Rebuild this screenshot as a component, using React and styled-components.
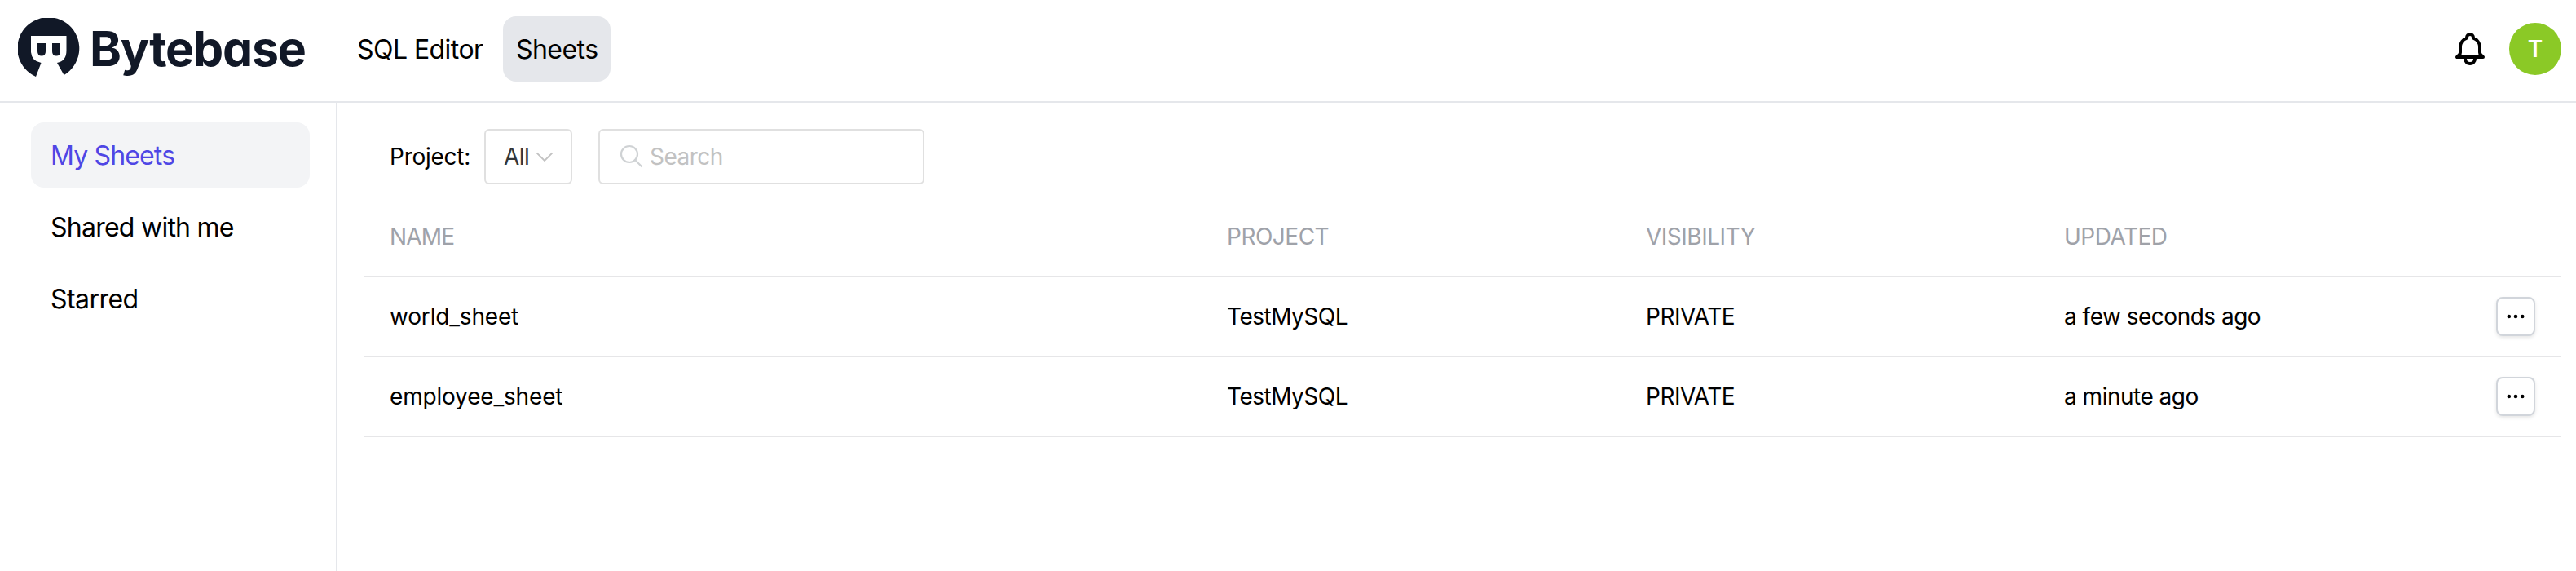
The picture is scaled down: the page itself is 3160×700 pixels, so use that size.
import React from "react";
import styled, { createGlobalStyle } from "styled-components";

const Global = createGlobalStyle`
  *, *::before, *::after { box-sizing: border-box; }
  body { margin: 0; background: #fff; color: #000; font-family: Inter, "Liberation Sans", sans-serif; }
`;

const Page = styled.div`
  display: flex;
  flex-direction: column;
  height: 700px;
  overflow: hidden;
`;

const Header = styled.header`
  display: flex;
  align-items: center;
  height: 126px;
  padding: 0 18px 4px 22px;
  border-bottom: 2px solid #e5e7eb;
`;

const Brand = styled.div`
  display: flex;
  align-items: center;
  width: 400px;
`;

const BrandMark = styled.svg`
  display: block;
  width: 76px;
  height: 73px;
  margin: 0 12px 4px 0;
`;

const Wordmark = styled.span`
  font-weight: 700;
  font-size: 59px;
  line-height: 76px;
  color: #111827;
  white-space: nowrap;
  letter-spacing: -1.2px;
  font-feature-settings: "cv11" 1;
`;

const Nav = styled.nav`
  display: flex;
  gap: 8px;
  flex: 1;
`;

const NavItem = styled.a`
  height: 80px;
  padding: 0 16px;
  border-radius: 16px;
  font-size: 32px;
  line-height: 81px;
  white-space: nowrap;
  letter-spacing: -0.55px;
  width: ${(p) => p.$width};
  background: ${(p) => (p.$active ? "#e5e7eb" : "transparent")};
`;

const Bell = styled.svg`
  width: 48px;
  height: 48px;
  margin-right: 24px;
`;

const Avatar = styled.div`
  display: flex;
  align-items: center;
  justify-content: center;
  width: 64px;
  height: 64px;
  border-radius: 50%;
  background: #8bc926;
  color: #fff;
  font-size: 28px;
  font-weight: 600;
`;

const Body = styled.div`
  display: flex;
  flex: 1;
`;

const Sidebar = styled.aside`
  display: flex;
  flex-direction: column;
  gap: 8px;
  width: 414px;
  padding: 24px 32px 0 38px;
  border-right: 2px solid #e5e7eb;
`;

const SideItem = styled.a`
  height: 80px;
  padding: 0 24px;
  border-radius: 16px;
  font-size: 32px;
  line-height: 81px;
  letter-spacing: ${(p) => p.$spacing || "-0.75px"};
  white-space: nowrap;
  color: ${(p) => (p.$active ? "#4f46e5" : "#000")};
  background: ${(p) => (p.$active ? "#f3f4f6" : "transparent")};
`;

const Main = styled.main`
  flex: 1;
  padding: 32px 18px 0 32px;
`;

const Filters = styled.div`
  display: flex;
  align-items: center;
  height: 68px;
  padding-left: 32px;
`;

const Label = styled.span`
  width: 116px;
  font-size: 28px;
  letter-spacing: -0.25px;
  white-space: nowrap;
`;

const Field = styled.div`
  display: flex;
  align-items: center;
  width: ${(p) => p.$width};
  height: 68px;
  margin-right: 32px;
  padding: 0 22px;
  border: 2px solid #e0e0e0;
  border-radius: 6px;
  font-size: 28px;
  letter-spacing: -0.5px;
  color: ${(p) => (p.$muted ? "#c2c2c2" : "#333639")};
`;

const FieldIcon = styled.svg`
  flex: none;
  width: ${(p) => p.$size};
  height: ${(p) => p.$size};
  margin: ${(p) => p.$margin};
`;

const Table = styled.div`
  padding-top: 16px;
`;

const Row = styled.div`
  display: grid;
  grid-template-columns: 1027px 514px 513px 1fr auto;
  align-items: center;
  height: 98px;
  padding: 0 32px;
  border-bottom: 2px solid #e6e6e8;
  font-size: 28px;
  color: ${(p) => (p.$head ? "#9fa2a9" : "#000")};
`;

const Cell = styled.span`
  white-space: nowrap;
  letter-spacing: ${(p) => p.$spacing || "-0.5px"};
`;

const MoreButton = styled.button`
  display: flex;
  align-items: center;
  justify-content: center;
  width: 48px;
  height: 48px;
  padding: 0;
  border: 2px solid #d1d5db;
  border-radius: 8px;
  background: #fff;
  box-shadow: 0 2px 4px rgba(0, 0, 0, 0.1);
`;

const rows = [
  { name: "world_sheet", project: "TestMySQL", visibility: "PRIVATE", updated: "a few seconds ago" },
  { name: "employee_sheet", project: "TestMySQL", visibility: "PRIVATE", updated: "a minute ago" },
];

export default function App() {
  return (
    <Page>
      <Global />
      <Header>
        <Brand>
          <BrandMark viewBox="0 0 76 73">
            <path fill="#111827" d="M22 72A38 38 0 1 1 56.5 70L48 55Q59.5 53 59.5 40V22H16V42Q17 53 28.5 55Z" />
            <path fill="#111827" d="M24 31H34V41Q34 46.5 29 46.5T24 41ZM42 31H52V41Q52 46.5 47 46.5T42 41Z" />
          </BrandMark>
          <Wordmark>Bytebase</Wordmark>
        </Brand>
        <Nav>
          <NavItem $width="187px">SQL Editor</NavItem>
          <NavItem $active $width="132px">Sheets</NavItem>
        </Nav>
        <Bell viewBox="0 0 24 24" fill="none" stroke="#000" strokeWidth="2" strokeLinecap="round" strokeLinejoin="round">
          <path d="M15 17h5l-1.405-1.405A2.032 2.032 0 0118 14.158V11a6.002 6.002 0 00-4-5.659V5a2 2 0 10-4 0v.341C7.67 6.165 6 8.388 6 11v3.159c0 .538-.214 1.055-.595 1.436L4 17h5m6 0v1a3 3 0 11-6 0v-1m6 0H9" />
        </Bell>
        <Avatar>T</Avatar>
      </Header>
      <Body>
        <Sidebar>
          <SideItem $active $spacing="-0.85px">My Sheets</SideItem>
          <SideItem>Shared with me</SideItem>
          <SideItem $spacing="-0.55px">Starred</SideItem>
        </Sidebar>
        <Main>
          <Filters>
            <Label>Project:</Label>
            <Field $width="108px">
              All
              <FieldIcon $size="20px" $margin="0 0 0 9px" viewBox="0 0 20 20" fill="none" stroke="#c2c2c2" strokeWidth="1.8">
                <path d="M0.5 5.5L10 15L19.5 5.5" />
              </FieldIcon>
            </Field>
            <Field $width="400px" $muted>
              <FieldIcon $size="30px" $margin="0 8px 0 1px" viewBox="0 0 30 30" fill="none" stroke="#cfd2d4" strokeWidth="2.2" strokeLinecap="round">
                <circle cx="13" cy="12" r="10" />
                <path d="M20 19L28 27" />
              </FieldIcon>
              Search
            </Field>
          </Filters>
          <Table>
            <Row $head>
              <Cell $spacing="-0.8px">NAME</Cell>
              <Cell>PROJECT</Cell>
              <Cell>VISIBILITY</Cell>
              <Cell>UPDATED</Cell>
            </Row>
            {rows.map((r) => (
              <Row key={r.name}>
                <Cell $spacing="-0.18px">{r.name}</Cell>
                <Cell>{r.project}</Cell>
                <Cell>{r.visibility}</Cell>
                <Cell>{r.updated}</Cell>
                <MoreButton>
                  <svg width="24" height="6" viewBox="0 0 24 6">
                    <circle cx="3.8" cy="3" r="2.3" />
                    <circle cx="12" cy="3" r="2.3" />
                    <circle cx="20.2" cy="3" r="2.3" />
                  </svg>
                </MoreButton>
              </Row>
            ))}
          </Table>
        </Main>
      </Body>
    </Page>
  );
}
